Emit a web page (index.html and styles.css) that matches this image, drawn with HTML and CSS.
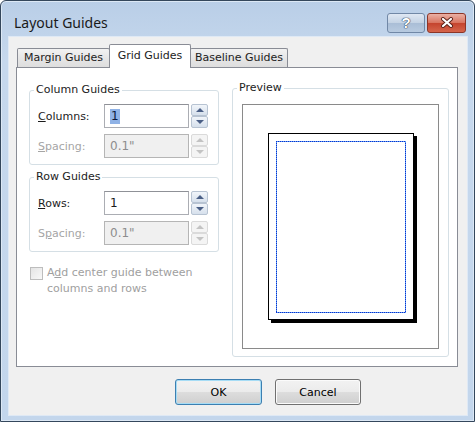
FILE: index.html
```html
<!DOCTYPE html>
<html lang="en">
<head>
    <meta charset="UTF-8">
    <meta name="viewport" content="width=device-width, initial-scale=1.0">
    <title>Layout Guides</title>
    <link rel="stylesheet" href="styles.css">
</head>
<body>

    <div class="window">
        <div class="titlebar">
            <span class="title">Layout Guides</span>
            <div class="caption-buttons">
                <span class="cap-btn help">?</span>
                <span class="cap-btn close">
                    <svg width="14" height="11" viewBox="0 0 14 11">
                        <path d="M3 2 L11 9 M11 2 L3 9" stroke="#5a2118" stroke-width="4" stroke-linecap="round"/>
                        <path d="M3 2 L11 9 M11 2 L3 9" stroke="#ffffff" stroke-width="2.2" stroke-linecap="round"/>
                    </svg>
                </span>
            </div>
        </div>

        <div class="client">
            <div class="tabs">
                <div class="tab first">Margin Guides</div>
                <div class="tab selected">Grid Guides</div>
                <div class="tab last">Baseline Guides</div>
            </div>

            <div class="tab-page">
                <div class="left-col">
                    <fieldset class="group">
                        <legend>Column Guides</legend>
                        <div class="field">
                            <label><u>C</u>olumns:</label>
                            <div class="textbox"><span class="sel">1</span></div>
                            <div class="spin"><span class="up"></span><span class="down"></span></div>
                        </div>
                        <div class="field disabled">
                            <label><u>S</u>pacing:</label>
                            <div class="textbox">0.1"</div>
                            <div class="spin"><span class="up"></span><span class="down"></span></div>
                        </div>
                    </fieldset>

                    <fieldset class="group rows">
                        <legend>Row Guides</legend>
                        <div class="field">
                            <label><u>R</u>ows:</label>
                            <div class="textbox">1</div>
                            <div class="spin"><span class="up"></span><span class="down"></span></div>
                        </div>
                        <div class="field disabled">
                            <label>S<u>p</u>acing:</label>
                            <div class="textbox">0.1"</div>
                            <div class="spin"><span class="up"></span><span class="down"></span></div>
                        </div>
                    </fieldset>

                    <div class="check disabled">
                        <span class="box"></span>
                        <span>A<u>d</u>d center guide between<br>columns and rows</span>
                    </div>
                </div>

                <fieldset class="group preview">
                    <legend>Preview</legend>
                    <div class="preview-area">
                        <div class="page">
                            <div class="margins"></div>
                        </div>
                    </div>
                </fieldset>
            </div>

            <div class="buttons">
                <button class="btn default">OK</button>
                <button class="btn">Cancel</button>
            </div>
        </div>
    </div>

</body>
</html>
```

FILE: styles.css
```css
body {
    margin: 0;
    font-family: "DejaVu Sans", sans-serif;
    font-size: 11px;
    color: #1c1c1c;
}

.window {
    width: 475px;
    height: 422px;
    box-sizing: border-box;
    border: 1px solid #34475c;
    border-radius: 6px 6px 0 0;
    background: linear-gradient(to bottom, #b9cee7, #c6d8ed 60px, #c3d6ec);
    box-shadow: inset 0 0 0 1px #dce8f5;
}

/* title bar */
.titlebar {
    height: 35px;
    box-sizing: border-box;
    padding: 8px 8px 0 13px;
    display: flex;
    align-items: center;
    justify-content: space-between;
}

.title {
    font-family: "Noto Sans", sans-serif;
    font-size: 14px;
    color: #1a1a1a;
}

.caption-buttons {
    display: flex;
    gap: 2px;
}

.cap-btn {
    width: 38px;
    height: 20px;
    box-sizing: border-box;
    border-radius: 3px;
    display: flex;
    align-items: center;
    justify-content: center;
}

.help {
    border: 1px solid #7188a6;
    background: linear-gradient(to bottom, #dfe8f3, #c3d2e4 50%, #a9bdd6 50%, #b8cbe0);
    color: #fff;
    font-family: "Liberation Sans", sans-serif;
    font-weight: bold;
    font-size: 15px;
    text-shadow: 0 0 1px #2c3f58, 0 0 1px #2c3f58, 0 0 1px #2c3f58;
}

.close {
    width: 39px;
    border: 1px solid #8c3527;
    background: linear-gradient(to bottom, #eab0a4, #d8735f 50%, #c4432d 50%, #d5654c);
}

/* client area */
.client {
    margin: 1px 7px 0 8px;
    height: 378px;
    box-sizing: border-box;
    padding: 7px 0 0 7px;
    background: #f0f0f0;
    box-shadow: 0 0 0 1px #dfe9f5;
}

.tabs {
    display: flex;
    align-items: flex-end;
    height: 23px;
    padding-left: 1px;
}

.tab {
    height: 19px;
    box-sizing: border-box;
    border: 1px solid #898c95;
    border-bottom: none;
    background: linear-gradient(to bottom, #f2f2f2, #e6e6e6 50%, #dedede);
    text-align: center;
    line-height: 18px;
    border-radius: 2px 2px 0 0;
}

.tab.first {
    width: 93px;
}

.tab.selected {
    width: 82px;
    height: 24px;
    margin: 0 -1px -1px -1px;
    background: #fff;
    position: relative;
    z-index: 1;
    line-height: 21px;
}

.tab.last {
    width: 98px;
}

.tab-page {
    width: 442px;
    height: 300px;
    box-sizing: border-box;
    border: 1px solid #898c95;
    background: #fff;
    display: flex;
    align-items: flex-start;
    padding-top: 13px;
}

.left-col {
    width: 190px;
    margin: 2px 0 0 12px;
}

/* group boxes */
.group {
    margin: 0;
    padding: 0 0 6px 0;
    border: 1px solid #d5dfe5;
    border-radius: 3px;
    min-width: 0;
}

.group legend {
    padding: 0 2px;
    margin-left: 4px;
    line-height: 14px;
}

.group.rows {
    margin-top: 5px;
}

.field {
    display: flex;
    align-items: center;
    height: 24px;
    padding-left: 8px;
    margin-top: 7px;
}

.field + .field {
    margin-top: 6px;
}

.field label {
    width: 66px;
}

.textbox {
    width: 85px;
    height: 24px;
    box-sizing: border-box;
    border: 1px solid #abadb3;
    border-top-color: #8f9197;
    background: #fff;
    padding-left: 5px;
    display: flex;
    align-items: center;
    font-size: 12px;
}

.sel {
    background: #8fb2e6;
    color: #0b1a3d;
    padding: 0 1px;
    line-height: 15px;
}

.spin {
    margin-left: 2px;
    width: 17px;
    height: 24px;
    display: flex;
    flex-direction: column;
}

.spin span {
    height: 12px;
    box-sizing: border-box;
    border: 1px solid #b7c3d2;
    border-radius: 2px;
    background: linear-gradient(to bottom, #f1f5fa, #d6e0ec);
    display: flex;
    align-items: center;
    justify-content: center;
}

.spin .up::after,
.spin .down::after {
    content: "";
    border-left: 4px solid transparent;
    border-right: 4px solid transparent;
}

.spin .up::after {
    border-bottom: 4px solid #4a5f86;
}

.spin .down::after {
    border-top: 4px solid #4a5f86;
}

.field.disabled label {
    color: #a5a5a5;
}

.field.disabled .textbox {
    background: #f0f0f0;
    border-color: #b5b5b5;
    color: #8d8d8d;
}

.field.disabled .spin span {
    border-color: #dadada;
    background: #f4f4f4;
}

.field.disabled .spin .up::after {
    border-bottom-color: #c3c3c3;
}

.field.disabled .spin .down::after {
    border-top-color: #c3c3c3;
}

.check {
    display: flex;
    align-items: flex-start;
    margin: 13px 0 0 1px;
    line-height: 16px;
    color: #a0a0a0;
}

.check .box {
    width: 13px;
    height: 13px;
    box-sizing: border-box;
    border: 1px solid #bdbdbd;
    background: linear-gradient(to bottom right, #e4e4e4, #f8f8f8);
    margin: 2px 4px 0 0;
    flex-shrink: 0;
}

/* preview */
.group.preview {
    width: 217px;
    height: 276px;
    box-sizing: border-box;
    margin-left: 13px;
    padding: 0 0 7px 0;
}

.preview-area {
    width: 197px;
    height: 245px;
    box-sizing: border-box;
    margin: 9px 0 0 9px;
    border: 1px solid #8a8a8a;
    display: flex;
    align-items: center;
    justify-content: center;
}

.page {
    width: 146px;
    height: 187px;
    box-sizing: border-box;
    border: 1px solid #000;
    box-shadow: 3px 3px 0 #000;
    background: #fff;
    padding: 7px 7px 6px 7px;
}

/* margin guide: 1px on / 1px off dotted line */
.margins {
    height: 100%;
    background:
        repeating-linear-gradient(to right, #0a2fd0 0 1px, #5e9ef0 1px 2px) top / 100% 1px no-repeat,
        repeating-linear-gradient(to right, #0a2fd0 0 1px, #5e9ef0 1px 2px) bottom / 100% 1px no-repeat,
        repeating-linear-gradient(to bottom, #0a2fd0 0 1px, #5e9ef0 1px 2px) left / 1px 100% no-repeat,
        repeating-linear-gradient(to bottom, #0a2fd0 0 1px, #5e9ef0 1px 2px) right / 1px 100% no-repeat;
}

/* dialog buttons */
.buttons {
    display: flex;
    gap: 13px;
    margin: 12px 0 0 159px;
}

.btn {
    width: 86px;
    height: 26px;
    font-family: "DejaVu Sans", sans-serif;
    font-size: 11px;
    color: #000;
    border: 1px solid #707070;
    border-radius: 3px;
    background: linear-gradient(to bottom, #f2f2f2, #ebebeb 50%, #dddddd 50%, #cfcfcf);
    box-shadow: inset 0 0 0 1px #fbfbfb;
    padding: 0;
}

.btn.default {
    width: 87px;
    border-color: #3c7fb1;
    box-shadow: inset 0 0 0 1px #a6dcf5;
}
```
